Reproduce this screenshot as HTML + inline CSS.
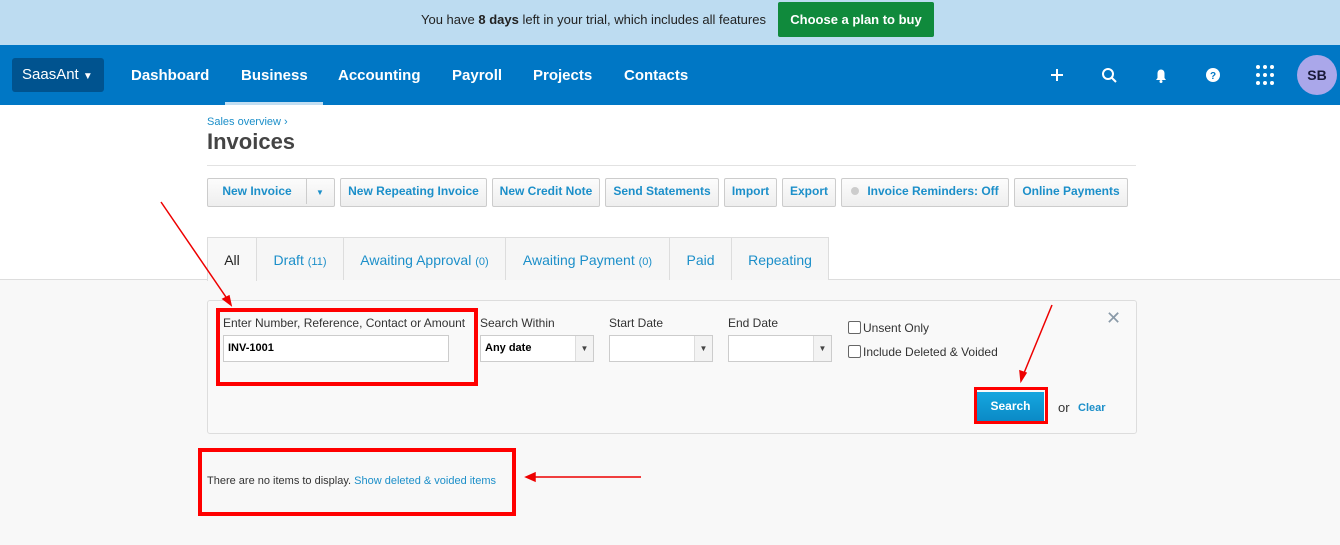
<!DOCTYPE html>
<html><head><meta charset="utf-8"><style>
*{box-sizing:border-box;margin:0;padding:0}
body{width:1340px;height:545px;overflow:hidden;font-family:"Liberation Sans",Arial,sans-serif;background:#f8f8f8;position:relative}
.a{position:absolute}
.banner{left:0;top:0;width:1340px;height:45px;background:#bddcf1}
.nav{left:0;top:45px;width:1340px;height:60px;background:#0077c5}
.nav .i{position:absolute;top:22px;color:#fff;font-weight:bold;font-size:15px}
.btn{position:absolute;top:178px;height:29px;border:1px solid #ccc;border-radius:2px;background:linear-gradient(#fcfcfc,#eee);color:#1c8fc9;font-weight:bold;font-size:12px;line-height:25px;text-align:center}
.tab{position:absolute;top:237px;height:43px;border:1px solid #ddd;border-bottom:none;background:#f6f6f6;color:#1c8fc9;font-size:14px;line-height:45px;text-align:center}
.tab small{font-size:11px}
.lbl{position:absolute;top:316px;font-size:12px;color:#333}
.inp{position:absolute;top:335px;height:27px;border:1px solid #ccc;background:#fff;font-size:11px;font-weight:bold;line-height:25px;padding-left:4px}
.dd{position:absolute;right:0;top:0;width:18px;height:25px;border-left:1px solid #ddd;background:#f3f3f3;font-size:8px;text-align:center;line-height:26px;color:#444;font-weight:normal}
.red{position:absolute;border:4px solid #f00}
.cb{position:absolute;width:13px;height:13px;border:1px solid #666;border-radius:2px;background:#fff}
</style></head><body>
<div class="a" style="left:0;top:105px;width:1340px;height:175px;background:#fff"></div>
<div class="a" style="left:0;top:279px;width:1340px;height:1px;background:#ddd"></div>
<div class="a banner"></div>
<div class="a" style="left:421px;top:12px;font-size:13px;color:#222">You have <b>8 days</b> left in your trial, which includes all features</div>
<div class="a" style="left:778px;top:2px;width:156px;height:35px;background:#108a3c;border-radius:2px;color:#fff;font-weight:bold;font-size:13px;line-height:35px;text-align:center">Choose a plan to buy</div>
<div class="a nav"></div>
<div class="a" style="left:12px;top:58px;width:92px;height:34px;background:#00538f;border-radius:3px;color:#fff;font-size:15px;line-height:34px;padding-left:10px">SaasAnt <span style="font-size:10px">▼</span></div>
<div class="nav a" style="background:none"><span class="i" style="left:131px">Dashboard</span><span class="i" style="left:241px">Business</span><span class="i" style="left:338px">Accounting</span><span class="i" style="left:452px">Payroll</span><span class="i" style="left:533px">Projects</span><span class="i" style="left:624px">Contacts</span></div>
<div class="a" style="left:225px;top:102px;width:98px;height:3px;background:#c2def2"></div>
<svg class="a" style="left:1040px;top:58px" width="250" height="34" viewBox="0 0 250 34">
<path d="M17 11v12M11 17h12" stroke="#fff" stroke-width="2"/>
<circle cx="68" cy="16" r="5" stroke="#fff" stroke-width="2" fill="none"/><path d="M72 20l4 4" stroke="#fff" stroke-width="2"/>
<path d="M116 22h10l-1.5-2v-5a3.5 3.5 0 0 0-7 0v5z" fill="#fff"/><circle cx="121" cy="23.5" r="1.5" fill="#fff"/>
<circle cx="173" cy="17" r="7" fill="#fff"/><text x="173" y="21" font-size="10" font-weight="bold" fill="#0077c5" text-anchor="middle" font-family="Liberation Sans">?</text>
<g fill="#fff"><circle cx="218" cy="9" r="2"/><circle cx="225" cy="9" r="2"/><circle cx="232" cy="9" r="2"/><circle cx="218" cy="17" r="2"/><circle cx="225" cy="17" r="2"/><circle cx="232" cy="17" r="2"/><circle cx="218" cy="25" r="2"/><circle cx="225" cy="25" r="2"/><circle cx="232" cy="25" r="2"/></g>
</svg>
<div class="a" style="left:1297px;top:55px;width:40px;height:40px;border-radius:50%;background:#aaa7ea;color:#1a1a3a;font-weight:bold;font-size:14px;line-height:40px;text-align:center">SB</div>
<div class="a" style="left:207px;top:116px;font-size:11px;color:#1c8fc9">Sales overview ›</div>
<div class="a" style="left:207px;top:129px;font-size:22px;font-weight:bold;color:#444">Invoices</div>
<div class="a" style="left:207px;top:165px;width:929px;height:1px;background:#e2e2e2"></div>
<div class="btn" style="left:207px;width:128px"><span style="display:inline-block;width:98px;border-right:1px solid #ccc">New Invoice</span><span style="display:inline-block;width:27px;font-size:8px">▼</span></div>
<div class="btn" style="left:340px;width:147px">New Repeating Invoice</div>
<div class="btn" style="left:492px;width:108px">New Credit Note</div>
<div class="btn" style="left:605px;width:114px">Send Statements</div>
<div class="btn" style="left:724px;width:53px">Import</div>
<div class="btn" style="left:782px;width:54px">Export</div>
<div class="btn" style="left:841px;width:168px"><span style="display:inline-block;width:8px;height:8px;border-radius:50%;background:#ccc;margin-right:8px"></span>Invoice Reminders: Off</div>
<div class="btn" style="left:1014px;width:114px">Online Payments</div>
<div class="tab" style="left:207px;width:50px;background:#f8f8f8;color:#222;height:44px">All</div>
<div class="tab" style="left:256px;width:88px">Draft <small>(11)</small></div>
<div class="tab" style="left:343px;width:163px">Awaiting Approval <small>(0)</small></div>
<div class="tab" style="left:505px;width:165px">Awaiting Payment <small>(0)</small></div>
<div class="tab" style="left:669px;width:63px">Paid</div>
<div class="tab" style="left:731px;width:98px">Repeating</div>
<div class="a" style="left:207px;top:300px;width:930px;height:134px;border:1px solid #ddd;border-radius:3px;background:#f9f9f9"></div>
<div class="lbl" style="left:223px">Enter Number, Reference, Contact or Amount</div>
<div class="lbl" style="left:480px">Search Within</div>
<div class="lbl" style="left:609px">Start Date</div>
<div class="lbl" style="left:728px">End Date</div>
<div class="inp" style="left:223px;width:226px">INV-1001</div>
<div class="inp" style="left:480px;width:114px;border-color:#ccc">Any date<div class="dd">▼</div></div>
<div class="inp" style="left:609px;width:104px"><div class="dd">▼</div></div>
<div class="inp" style="left:728px;width:104px"><div class="dd">▼</div></div>
<div class="cb" style="left:848px;top:321px"></div><div class="a" style="left:863px;top:321px;font-size:12px;color:#333">Unsent Only</div>
<div class="cb" style="left:848px;top:345px"></div><div class="a" style="left:863px;top:345px;font-size:12px;color:#333">Include Deleted &amp; Voided</div>
<div class="a" style="left:1106px;top:308px;font-size:18px;color:#8a9aa8">✕</div>
<div class="a" style="left:977px;top:392px;width:67px;height:29px;background:linear-gradient(#15a6df,#0b8ac6);color:#fff;font-weight:bold;font-size:12px;line-height:29px;text-align:center">Search</div>
<div class="a" style="left:1058px;top:400px;font-size:13px;color:#333">or</div>
<div class="a" style="left:1078px;top:402px;font-size:11px;color:#1c8fc9;font-weight:bold">Clear</div>
<div class="red" style="left:216px;top:308px;width:262px;height:78px"></div>
<div class="red" style="left:974px;top:387px;width:74px;height:37px;border-width:3px"></div>
<div class="red" style="left:198px;top:448px;width:318px;height:68px"></div>
<div class="a" style="left:207px;top:475px;font-size:11px;color:#333">There are no items to display. <span style="color:#1c8fc9">Show deleted &amp; voided items</span></div>
<svg class="a" style="left:0;top:0" width="1340" height="545">
<g stroke="#e00" stroke-width="1.5" fill="#e00">
<line x1="161" y1="202" x2="228" y2="300"/><path d="M231 305l-8-6 6-3z"/>
<line x1="1052" y1="305" x2="1024" y2="373"/><path d="M1021 381l-1-10 6 2z"/>
<line x1="641" y1="477" x2="534" y2="477"/><path d="M526 477l9-4v8z"/>
</g></svg>
</body></html>
